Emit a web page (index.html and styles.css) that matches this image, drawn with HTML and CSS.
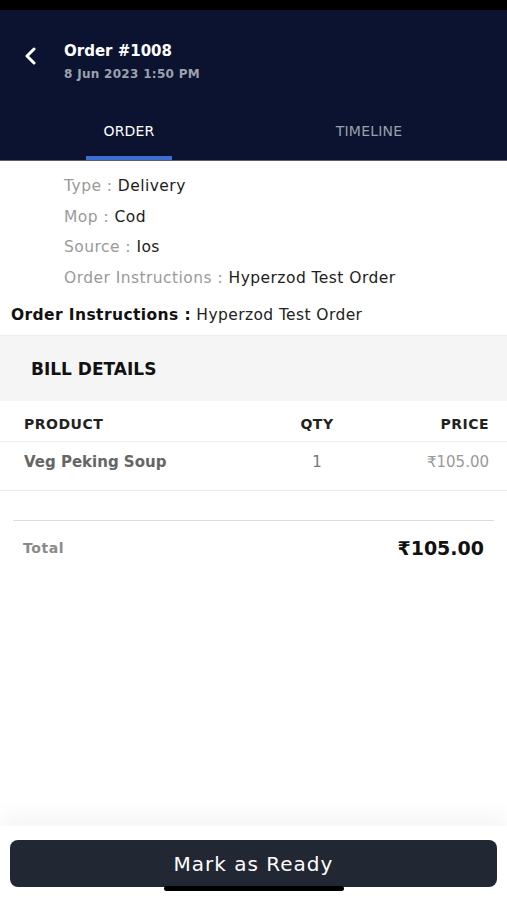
FILE: index.html
```html
<!DOCTYPE html>
<html>
<head>
<meta charset="utf-8">
<link rel="stylesheet" href="styles.css">
</head>
<body>
<div class="screen">
  <div class="statusbar"></div>
  <header class="header">
    <div class="titlebar">
      <svg class="back" width="14" height="18" viewBox="0 0 14 18"><path d="M10 2 L3 9 L10 16" fill="none" stroke="#fff" stroke-width="3" stroke-linecap="round" stroke-linejoin="round"/></svg>
      <div class="titles">
        <div class="title">Order #1008</div>
        <div class="date">8 Jun 2023 1:50 PM</div>
      </div>
    </div>
    <nav class="tabs">
      <div class="tab active">ORDER</div>
      <div class="tab">TIMELINE</div>
    </nav>
  </header>
  <main class="content">
    <div class="meta">
      <div class="meta-row"><span class="lbl">Type : </span><span class="val">Delivery</span></div>
      <div class="meta-row"><span class="lbl">Mop : </span><span class="val">Cod</span></div>
      <div class="meta-row"><span class="lbl">Source : </span><span class="val">Ios</span></div>
      <div class="meta-row"><span class="lbl">Order Instructions : </span><span class="val">Hyperzod Test Order</span></div>
    </div>
    <div class="instr"><b>Order Instructions :</b> Hyperzod Test Order</div>
    <div class="bill-head">BILL DETAILS</div>
    <div class="table">
      <div class="trow thead">
        <span class="c-prod">PRODUCT</span><span class="c-qty">QTY</span><span class="c-price">PRICE</span>
      </div>
      <div class="trow titem">
        <span class="c-prod">Veg Peking Soup</span><span class="c-qty">1</span><span class="c-price">₹105.00</span>
      </div>
    </div>
    <div class="total">
      <span class="t-lbl">Total</span><span class="t-val">₹105.00</span>
    </div>
  </main>
  <footer class="footer">
    <button class="ready">Mark as Ready</button>
    <div class="home"></div>
  </footer>
</div>
</body>
</html>
```
FILE: styles.css
```css
* { box-sizing: border-box; }
html, body { margin: 0; padding: 0; }
body { font-family: "DejaVu Sans", "Noto Sans", sans-serif; background: #fff; }
.screen { width: 507px; height: 900px; display: flex; flex-direction: column; position: relative; overflow: hidden; }
.statusbar { height: 10px; background: #000; }
.header { background: #0b1330; height: 151px; flex: none; display: flex; flex-direction: column; border-bottom: 1px solid #5a6070; }
.titlebar { display: flex; align-items: flex-start; padding: 32px 0 0 24px; height: 92px; }
.back { margin-top: 5px; }
.titles { margin-left: 26px; }
.title { color: #fff; font-size: 15px; font-weight: 600; line-height: 18px; }
.date { color: #9ca1ae; font-size: 12px; font-weight: 600; line-height: 16px; margin-top: 6px; letter-spacing: 0.3px; }
.tabs { display: flex; flex: 1; }
.tab { width: 222px; text-align: center; color: #9aa0ad; font-size: 14px; line-height: 18px; padding-top: 20px; position: relative; letter-spacing: 0.2px; }
.tab:first-child { width: 258px; }
.tab.active { color: #fff; }
.tab.active::after { content: ""; position: absolute; left: 86px; width: 86px; bottom: 0; height: 4px; background: #3b6fd4; }
.content { flex: 1; }
.meta { padding: 15px 0 0 64px; }
.meta-row { height: 30.5px; font-size: 15.5px; line-height: 20px; letter-spacing: 0.45px; }
.lbl { color: #9a9a9a; }
.val { color: #1d1d1d; font-weight: 500; }
.instr { padding: 7px 0 0 11px; font-size: 15.5px; color: #222; height: 37px; line-height: 20px; letter-spacing: 0.4px; }
.instr b { font-weight: 700; color: #111; }
.bill-head { background: #f5f5f5; height: 66px; padding: 0 0 0 31px; display: flex; align-items: center; font-weight: 700; font-size: 17px; color: #111; border-top: 1px solid #ececec; }
.trow { display: flex; align-items: center; padding: 0 18px 0 24px; }
.thead { height: 41px; padding-top: 5px; border-bottom: 1px solid #efefef; font-size: 14px; font-weight: 700; color: #222; letter-spacing: 0.5px; }
.titem { height: 49px; border-bottom: 1px solid #ececec; font-size: 15px; padding-bottom: 8px; }
.c-prod { flex: 1; }
.c-qty { width: 40px; text-align: center; margin-right: 52px; }
.c-price { width: 100px; text-align: right; }
.titem .c-prod { color: #666; font-weight: 600; }
.titem .c-qty { color: #777; }
.titem .c-price { color: #999; }
.total { margin: 29px 13px 0 13px; border-top: 1px solid #dcdcdc; display: flex; justify-content: space-between; align-items: center; padding: 16px 10px 0 10px; }
.t-lbl { color: #8a8a8a; font-size: 14px; font-weight: 600; letter-spacing: 0.6px; }
.t-val { color: #111; font-size: 19px; font-weight: 600; }
.footer { height: 74px; flex: none; background: #fff; padding: 14px 10px 0 10px; position: relative; box-shadow: 0 -12px 20px rgba(0,0,0,0.04); }
.ready { width: 487px; height: 47px; border: none; border-radius: 8px; background: #222734; color: #fff; font-family: "DejaVu Sans", "Noto Sans", sans-serif; font-size: 20px; font-weight: 400; letter-spacing: 1px; display: block; }
.home { position: absolute; left: 164px; width: 180px; top: 60px; height: 5px; border-radius: 3px; background: #000; }
```
